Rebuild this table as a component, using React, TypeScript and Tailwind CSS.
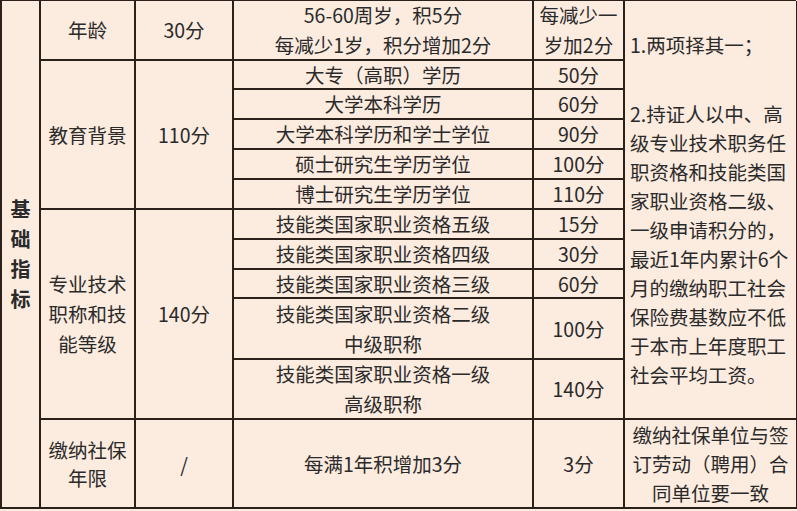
import React from 'react';

const line = 'border-r-2 border-b-2 border-[#2b211a]';
const center = `${line} flex flex-col items-center justify-center text-center whitespace-nowrap`;

const eduRows = [
  ['大专（高职）学历', '50分'],
  ['大学本科学历', '60分'],
  ['大学本科学历和学士学位', '90分'],
  ['硕士研究生学历学位', '100分'],
  ['博士研究生学历学位', '110分'],
];

const rowStart = ['row-start-2', 'row-start-3', 'row-start-4', 'row-start-5', 'row-start-6'];

const notes = [
  '2.持证人以中、高',
  '级专业技术职务任',
  '职资格和技能类国',
  '家职业资格二级、',
  '一级申请积分的，',
  '最近1年内累计6个',
  '月的缴纳职工社会',
  '保险费基数应不低',
  '于本市上年度职工',
  '社会平均工资。',
];

export default function App() {
  return (
    <div
      className="w-[797px] h-[511px] overflow-hidden bg-[#fcebdf] text-[#2a2a2a]"
      style={{ fontFamily: '"Noto Sans CJK SC", "Noto Sans", sans-serif' }}
    >
      <div className="grid w-[796px] grid-cols-[39px_95px_98px_300px_91px_173px] grid-rows-[60px_29px_30px_30px_30px_30px_30px_30px_29px_61px_60px_89px] border-l-2 border-t border-[#2b211a] text-[19.5px] leading-[30px]">
        {/* left category */}
        <div className={`${center} col-start-1 row-start-1 row-span-12 font-bold text-[20px]`}>
          {'基础指标'.split('').map(c => (
            <span key={c} className="block leading-[30px]">{c}</span>
          ))}
        </div>

        {/* age */}
        <div className={`${center} col-start-2 row-start-1`}>年龄</div>
        <div className={`${center} col-start-3 row-start-1`}>30分</div>
        <div className={`${center} col-start-4 row-start-1`}>
          <span>56-60周岁，积5分</span>
          <span>每减少1岁，积分增加2分</span>
        </div>
        <div className={`${center} col-start-5 row-start-1`}>
          <span>每减少一</span>
          <span>岁加2分</span>
        </div>

        {/* notes */}
        <div className={`${line} col-start-6 row-start-1 row-span-11 flex flex-col justify-center pl-[5px] whitespace-nowrap leading-[29px]`}>
          <span>1.两项择其一；</span>
          <div className="mt-[40px] flex flex-col">
            {notes.map(n => (
              <span key={n}>{n}</span>
            ))}
          </div>
        </div>

        {/* education */}
        <div className={`${center} col-start-2 row-start-2 row-span-5`}>教育背景</div>
        <div className={`${center} col-start-3 row-start-2 row-span-5`}>110分</div>
        {eduRows.map(([t, p], i) => (
          <React.Fragment key={t}>
            <div className={`${center} col-start-4 ${rowStart[i]}`}>{t}</div>
            <div className={`${center} col-start-5 ${rowStart[i]}`}>{p}</div>
          </React.Fragment>
        ))}

        {/* professional */}
        <div className={`${center} col-start-2 row-start-7 row-span-5`}>
          <span>专业技术</span>
          <span>职称和技</span>
          <span>能等级</span>
        </div>
        <div className={`${center} col-start-3 row-start-7 row-span-5`}>140分</div>
        <div className={`${center} col-start-4 row-start-7`}>技能类国家职业资格五级</div>
        <div className={`${center} col-start-5 row-start-7`}>15分</div>
        <div className={`${center} col-start-4 row-start-8`}>技能类国家职业资格四级</div>
        <div className={`${center} col-start-5 row-start-8`}>30分</div>
        <div className={`${center} col-start-4 row-start-9`}>技能类国家职业资格三级</div>
        <div className={`${center} col-start-5 row-start-9`}>60分</div>
        <div className={`${center} col-start-4 row-start-10`}>
          <span>技能类国家职业资格二级</span>
          <span>中级职称</span>
        </div>
        <div className={`${center} col-start-5 row-start-10`}>100分</div>
        <div className={`${center} col-start-4 row-start-11`}>
          <span>技能类国家职业资格一级</span>
          <span>高级职称</span>
        </div>
        <div className={`${center} col-start-5 row-start-11`}>140分</div>

        {/* social security */}
        <div className={`${center} col-start-2 row-start-12 leading-[28px]`}>
          <span>缴纳社保</span>
          <span>年限</span>
        </div>
        <div className={`${center} col-start-3 row-start-12`}>/</div>
        <div className={`${center} col-start-4 row-start-12`}>每满1年积增加3分</div>
        <div className={`${center} col-start-5 row-start-12`}>3分</div>
        <div className={`${center} col-start-6 row-start-12 leading-[29px]`}>
          <span>缴纳社保单位与签</span>
          <span>订劳动（聘用）合</span>
          <span>同单位要一致</span>
        </div>
      </div>
    </div>
  );
}
